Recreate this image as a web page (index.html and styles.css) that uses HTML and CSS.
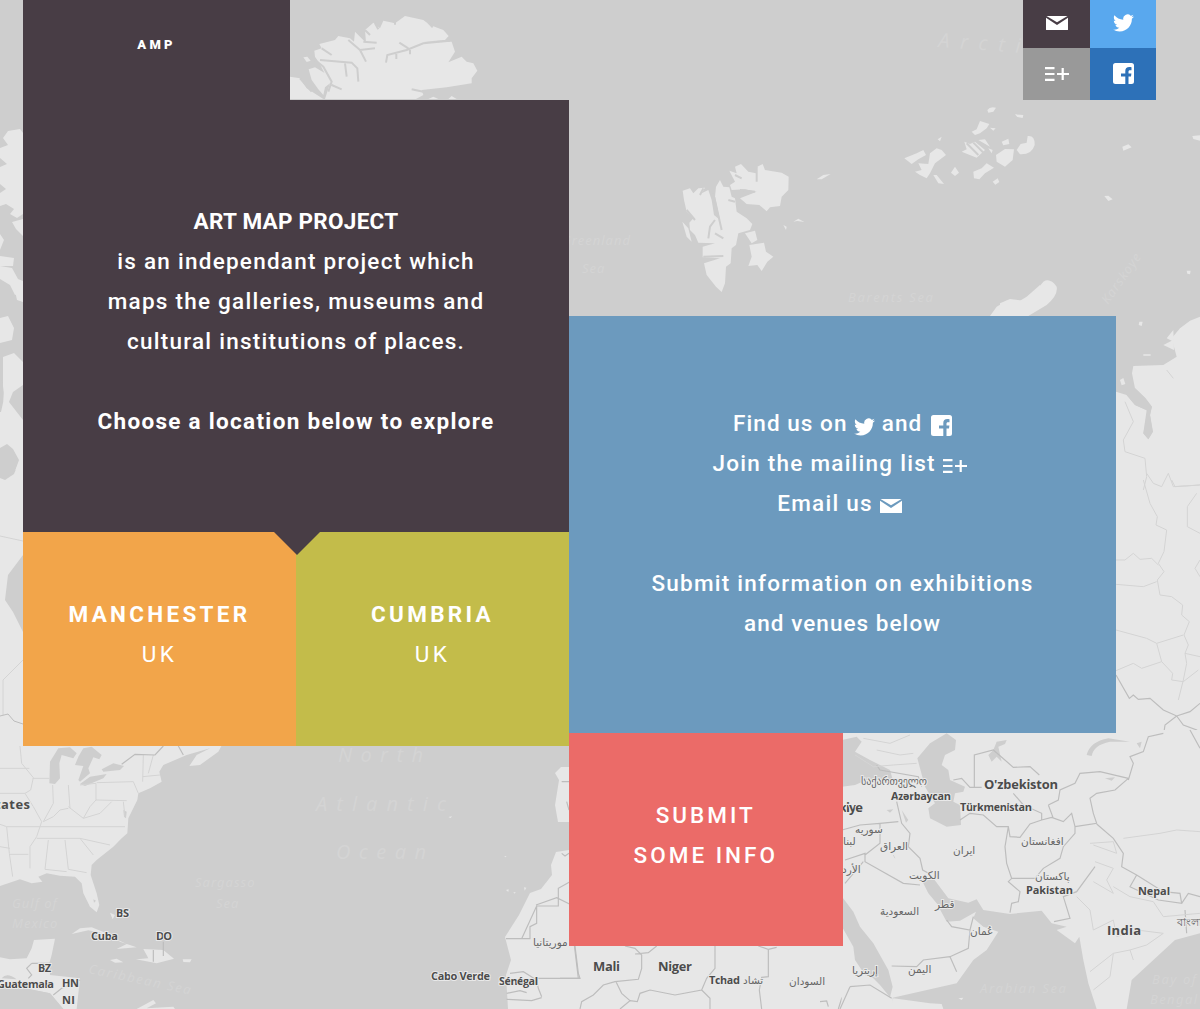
FILE: index.html
```html
<!DOCTYPE html>
<html lang="en">
<head>
  <meta charset="UTF-8">
  <meta name="viewport" content="width=device-width, initial-scale=1.0">
  <title>Art Map Project</title>
  <link rel="stylesheet" href="styles.css">
</head>
<body>

<!-- icon shapes used in the header and in the text -->
<svg class="defs" width="0" height="0">
  <symbol id="mail" viewBox="0 0 22 14"><path fill="currentColor" d="M.5 0h21L11 6.2zM0 1.800L11 8.900 22 1.800V13.500a.5.5 0 0 1-.5.5H.5a.5.5 0 0 1-.5-.5z"/></symbol>
  <symbol id="twitter" viewBox="0 2.200 24 19.600"><path fill="currentColor" d="M23.950 4.570a10 10 0 0 1-2.820.77 4.960 4.960 0 0 0 2.160-2.720 9.900 9.900 0 0 1-3.120 1.190 4.920 4.920 0 0 0-8.390 4.480C7.690 8.090 4.070 6.130 1.640 3.160a4.820 4.820 0 0 0-.67 2.480c0 1.710.87 3.210 2.190 4.100a4.900 4.900 0 0 1-2.230-.62v.06a4.920 4.920 0 0 0 3.950 4.830 5 5 0 0 1-2.210.08 4.940 4.940 0 0 0 4.600 3.420A9.870 9.870 0 0 1 0 19.540a14 14 0 0 0 7.550 2.210c9.050 0 14-7.500 14-13.980 0-.21 0-.42-.02-.63a9.940 9.940 0 0 0 2.460-2.550z"/></symbol>
  <symbol id="facebook" viewBox="0 0 21 21"><path fill="currentColor" d="M2.500 0h16A2.500 2.500 0 0 1 21 2.500v16a2.500 2.500 0 0 1-2.500 2.500H15.500v-7.500h2.500l.4-3H15.500V8.700c0-1 .4-1.500 1.500-1.500H18.500V4.300c-.5-.1-1.300-.2-2.200-.2-2.600 0-4 1.400-4 4v2.400H8v3h4.300V21H2.500A2.500 2.500 0 0 1 0 18.500v-16A2.500 2.500 0 0 1 2.500 0z"/></symbol>
  <symbol id="list" viewBox="0 0 24 14"><path fill="none" stroke="currentColor" stroke-width="2.200" d="M0 1.200h9.500M0 7h9.500M0 12.800h9.500M12 7h12M17.700 1v12"/></symbol>
</svg>

<svg class="map" viewBox="0 0 1200 1009" preserveAspectRatio="none">
  <!-- greenland -->
  <g transform="translate(280 0) scale(.33333)">
    <path class="land" d="M30 297V230L60 235 80 265 130 297zM70 172L82 170 92 182 80 186zM86 208L105 202 135 220 150 250 135 262 130 285 115 268 95 240zM103 152L125 145 118 132 165 120 175 108 210 115 222 125 225 95 258 128 255 90 280 68 300 85 310 62 345 70 375 48 430 60 450 75 490 90 506 108 495 120 430 125 515 125 525 155 505 187 545 170 560 185 580 190 592 212 575 235 575 250 500 262 425 270 430 285 408 297H135L150 250 118 190 105 170zM445 297L460 290 475 297zM505 297L515 288 530 297z"/>
    <path class="fjord" d="M120 180L215 188 232 205 235 245M195 190L200 230M205 120L240 150 285 145M240 150L258 185M250 125L290 128M318 188L322 165 380 150 430 130 510 122M358 128L385 145M390 150V163M349 162V177M105 180L130 200 155 245 145 275M155 255L185 268M255 90L270 105M285 70L295 88M345 60V74M445 68L458 82M125 145L155 165M395 268L430 275M60 235L95 275"/>
  </g>

  <!-- svalbard and franz josef land -->
  <g transform="translate(640 0) scale(.33333)">
    <path class="land" d="M128 572L150 565 160 580 175 565 195 563 185 580 205 570 215 600 222 645 240 660 225 590 228 560 240 540 250 560 268 562 275 590 285 595 290 635 320 655 337 672 330 690 295 700 288 735 275 745 272 790 258 800 255 850 245 876 228 860 200 825 192 790 240 775 188 772 188 740 225 730 175 728 165 705 150 690 148 668 160 655 140 635 132 600zM127 665L145 685 155 725 140 710zM268 512L290 520 285 500 303 492 325 515 348 520 352 500 368 492 375 510 425 518 446 530 445 570 425 590 420 618 390 622 380 634 358 615 320 612 300 595 350 575 315 568 275 570 270 555 285 545zM315 700L345 692 352 720 335 730 325 715zM328 735L372 728 378 755 400 770 382 785 365 813 352 795 325 798 335 770zM530 538L550 525 572 522 545 538zM460 665L475 656 493 666 472 663zM430 675L440 680 438 690z"/>
    <path class="land" d="M793 475L830 460 850 450 858 465 835 478 815 492zM870 460L890 445 905 450 918 465 885 490 870 520 860 535 840 525 825 515 845 510 835 490 865 492zM893 418L905 410 900 424zM880 525L890 525 912 552 895 550zM933 518L945 500 957 518 945 528zM965 455L980 448 973 425 990 432 1005 425 1035 450 1010 473zM995 395L1010 388 1020 363 1048 372 1040 385 1020 400 1005 405zM1042 330Q1050 318 1068 323L1060 335 1045 338zM1125 343L1150 345 1148 354 1132 351zM1085 425L1105 416 1108 432 1090 436zM1068 465L1095 447 1122 448 1118 480 1095 500 1070 485zM1130 450L1142 432 1160 428 1163 408Q1185 405 1184 435 1175 465 1140 463zM1000 515L1025 505 1040 490 1062 503 1035 520 1018 538 1002 535zM1058 545L1073 535 1078 546 1066 554zM1045 445L1058 450 1055 460zM1015 420L1050 440 1035 418zM1050 383L1067 385 1060 392zM968 485L988 518M1050 948L1070 920 1100 902 1130 908 1160 890 1200 855V925L1145 948z"/>
    <path class="fjord" d="M180 585L190 565M220 580L245 690M205 715L210 680 225 660M225 700L250 715M140 630L165 660M190 770L250 768M350 500V545M300 570L345 575M285 525L305 535M265 600L285 605M980 430L1015 465M1000 428L1032 460"/>
  </g>

  <!-- siberia -->
  <g transform="translate(1000 90) scale(.33333)">
    <path class="land" d="M0 640L30 627 70 632 105 605 130 575Q150 562 170 590 175 615 140 645L85 678H0zM367 170L385 163 395 172 370 182zM313 318L325 317 338 328 325 333zM577 138L600 136V152L580 147zM560 542L572 542 570 553 562 551zM418 695L428 695 425 708 416 705zM360 870L370 864 376 882 365 886zM430 793H452V797H430z"/>
    <path class="land" d="M600 680L570 692 540 715 515 745 530 800 490 825 400 828 396 850 405 895 435 925 455 950 450 975 458 1025 445 1048 430 1030 440 960 405 945 380 915 348 905V1200H600z"/>
    <path class="land" d="M520 720L500 745 515 752 490 765 522 780z"/>
    <path class="sea" d="M404 893L437 925 456 950 450 975 459 1025 445 1048 430 1030 443 962 405 945 380 915z"/>
    <path class="state" d="M375 935L400 995 370 1050 375 1085 435 1105 440 1160 430 1200M440 1150L460 1180 485 1190 505 1150 520 1190 600 1185M500 840L520 865"/>
  </g>
  <path class="land" d="M1116 490H1200V1009H1116z"/>
  <g transform="translate(1100 480) scale(.33333)">
    <path class="state" d="M130 0L150 70 172 110 168 135 200 150 192 215 175 250 192 275 172 300 180 345 215 350 248 375 245 405 268 425 252 465 265 495 255 520 260 550 250 600 235 660M48 240H75L100 220 120 238 155 235 175 255M48 313L130 320 170 305M48 450L140 475 170 490 250 465M170 490L185 545 218 580 215 600 250 605 295 570M48 572L100 550 125 565 185 545M255 520L300 530M290 40L262 80 262 140 300 160M300 240L285 265 300 290M215 0L225 20 300 15"/>
    <path class="border" d="M48 585L88 655 100 645 115 658 150 655 190 690 230 708 270 695 300 670M230 708L250 735 290 750 295 800M230 708L195 735 190 770 145 765 130 815 85 825"/>
  </g>

  <!-- canada, seen along the left edge -->
  <path class="land" d="M8 131L20 129 23 133V214L17 218 10 214 14 209 6 204 0 206V193L6 189 0 184V167L7 164 0 158V148L8 145 3 138zM12 222L23 219V236L16 229zM0 234L4 240 0 250zM0 256L14 258 13 266 0 266zM15 291L23 290V302L17 300zM0 266L12 268 18 279 23 281V290L15 295 10 285 0 279zM0 318L8 316 14 328 12 340 0 343zM3 357L14 353 23 362V385L13 392 9 402 23 420V470H0V410L3 400z"/>
  <path class="sea" d="M0 375Q7 392 1 412L0 412zM0 448L7 444 13 449 19 460 14 474 5 476 0 470z"/>
  <path class="land" d="M0 478L5 480 14 474 23 452V760H0z"/>
  <path class="sea" d="M23 555L8 575 5 600 13 612 23 632z"/>
  <path class="state" d="M0 536L23 541M3 680V715M3 680L23 660"/>
  <path class="border" d="M0 716L8 714 14 721 23 724"/>

  <!-- north america -->
  <g transform="translate(0 730) scale(.33333)">
    <path class="land" d="M0 0H690L655 65 600 105 568 108 590 75 630 55 560 75 490 105 478 125 485 155 450 175 415 190 412 210 385 265 382 310 365 325 340 350 290 390 275 405 272 435 290 490 298 525 290 547 270 530 250 490 245 460 225 440 180 437 140 430 115 440 127 455 95 460 60 448 0 468z"/>
    <path class="land" d="M215 612L240 595 275 592 320 610 360 635 410 652 350 657 380 642 310 610 265 601zM330 690L350 686 370 697 345 698zM408 688L445 685 430 657 490 660 522 686 470 700zM548 688L575 688 570 697 550 696zM0 682L30 688 80 685 95 655 102 630 165 626 155 675 148 700 150 735 240 745 230 837H190L150 790 0 760zM330 548L345 555 338 568zM410 837L460 810 468 820 440 835 520 830 525 837z"/>
    <path class="sea" d="M148 160L150 95 175 55 210 52 230 70 220 85 185 75 178 100 180 145 165 162zM235 80L250 55 275 50 305 75 298 88 280 82 265 115 270 130 240 155 235 150 250 108 225 105zM240 162L270 140 320 132 310 145 255 168zM305 118L340 100 372 108 360 120 310 125zM280 508L288 512 282 518zM370 240L380 245 378 265 372 260zM5 745Q20 725 50 748zM0 760L150 790 190 837H0z"/>
    <path class="state" d="M60 48L65 100 100 143 92 180 75 190M0 115H88M98 145H148M0 190H75L100 230 125 275 110 320 90 350V415M0 283L20 290H375M20 290L28 370 38 440M30 373H85M0 350L30 355M158 165L160 220 130 275M205 165L210 235M205 235L180 240 160 260 130 275M240 165L288 160V210L270 230 250 265 205 230M290 158L400 155 415 190M288 210L380 212M250 265L300 250 335 215M110 325L240 325 330 345M145 330L135 418 200 425M195 330L205 418 260 428M240 325L280 375M430 75L428 155M428 140L480 135M460 75L445 130M370 215L375 260"/>
    <path class="border" d="M490 48L465 75 405 73 365 103M535 48L550 75M95 700L150 700M95 700L80 715 95 735 85 745M240 750L185 775 160 795M460 660V695M490 635V678"/>
  </g>

  <!-- west africa and iberia -->
  <path class="land" d="M569 767L561 767 555 773 559 780 555 805 558 822H569zM569 850L556 852 551 865 552 875 541 889 530 893 519 915 505 937 511 960 506 975 508 1009H890V850z"/>
  <g transform="translate(290 730) scale(.33333)">
    <path class="land" d="M648 480L656 478 655 486zM670 487L677 486 674 491zM702 472L709 473 704 482zM475 261L486 259 482 264zM642 379L649 378 648 382z"/>
    <path class="border" d="M648 626H720V590L740 580V528H805V475L840 455M738 525L800 503 840 523M740 528L695 626M850 620L865 745H740M660 730L700 725 740 750 745 775 755 800M650 790L690 782 710 788M650 808L725 812 755 803M815 155H837M830 215L837 240M815 370L825 378 837 370"/>
  </g>
  <g transform="translate(560 930) scale(.33333)">
    <path class="border" d="M45 48L55 130 60 145H0M195 48L225 55 245 75V115L235 148 165 155 130 165 100 195 65 215 60 237M225 72L265 68 290 48M168 155L185 190 210 212 180 237M210 212L232 215 240 190 270 180 345 195 425 180 440 145 465 115V48M425 180L450 205V237M595 48L625 58V140L605 142 598 180 605 237M625 58L650 52M780 215L800 213 805 230M900 165L870 172 845 205 835 237"/>
  </g>

  <!-- middle east and india -->
  <g transform="translate(830 730) scale(.33333)">
    <path class="land" d="M35 0H1110V837H35z"/>
    <path class="sea" d="M36 30L80 20 95 35 75 65 120 90 180 120 190 155 110 150 75 165 36 170zM300 40L350 10 378 30 375 60 345 75 335 105 355 120 360 150 405 170 400 185 375 190 370 215 390 225 393 285 350 290 300 265 295 235 315 220 285 170 262 85zM275 450L310 445 355 505 415 518 440 508 460 540 540 552 635 542 665 580 710 590 680 600 735 640 748 620 760 690 775 760 800 837H330L190 837 188 803 380 760 430 690 470 660 505 605 460 590 430 565 438 545 390 572 350 575 320 520 295 490zM36 500L70 545 90 590 130 640 175 720 188 770 180 802 150 765 130 745 105 735 75 690 70 650 36 590zM890 837L905 750 1035 630 1110 610V837z"/>
    <path class="land" d="M190 805L300 820 335 822 340 837H180zM385 805L400 803 395 810z"/>
    <path class="sea" d="M770 75Q780 35 835 25L900 35 840 35Q790 45 785 78zM500 35L530 30 525 42 505 50 515 95 500 80 485 95 475 75 490 60zM920 40L935 35 930 55zM825 145L855 142 845 152zM215 240L235 270 228 278zM170 240L190 238 180 248z"/>
    <path class="border" d="M433 172V75L490 60 550 112 600 110 628 135M370 150L395 145 420 172 455 172M390 270L420 250 460 255 500 290 535 290 540 320 570 322 600 282 635 270 665 262 700 275 725 250 735 290M635 270V250L580 225 550 190M655 225L685 210 690 180 735 160 750 130 810 125 895 145 855 180 800 190 780 205 790 250 800 280 735 290M655 225L670 265M895 150L910 100 900 80 940 65 955 20 1000 10M1080 0L1110 55M535 290L525 350 530 400 545 445H615M545 445L535 455 570 485 565 515 545 520 540 548M615 445L640 415 690 385 700 350 735 310 735 290M800 282L850 325 880 370 875 410 920 435 1000 485 1050 490 1055 520 985 510 900 470 920 435M795 410L740 485 700 500 720 565 672 575M200 215L215 280 240 310 235 350 270 385 278 420 300 432M36 300L90 285 150 280 205 275M105 375L150 340 150 280M45 390L105 370V395L220 460 270 465M45 460L100 395M350 570L365 590 420 600 430 560M420 600L415 655 360 680 280 690 260 710 185 708M360 680L380 725M60 770L120 765 185 805M60 770L30 837M140 105L150 120 265 140 275 170M1055 520L1075 490 1110 500M1065 540L1070 610"/>
    <path class="state" d="M75 75L130 110 190 105 260 100M100 25L180 40 240 15M140 60L210 75 250 70M780 340L850 335 860 370 790 345M795 395L850 415 830 450 850 490 790 455M850 470L900 500 970 515 1000 560 1110 550M740 500L780 540 790 600 850 570 860 620 920 600 1000 610M780 725L850 670 900 660 950 645 1000 610M850 670L840 740 790 780M900 660L910 690M880 325L990 310 1040 300 1110 305M190 375L195 385"/>
  </g>

  <!-- sea names -->
  <g class="sea-name">
    <text x="338" y="762" textLength="93">North</text>
    <text x="316" y="811" textLength="138">Atlantic</text>
    <text x="336" y="859" textLength="98">Ocean</text>
    <text x="938" y="47" textLength="110" transform="rotate(4 938 47)">Arctic</text>
    <text class="small" x="195" y="887">Sargasso</text>
    <text class="small" x="216" y="908">Sea</text>
    <text class="small" x="12" y="908">Gulf of</text>
    <text class="small" x="12" y="928">Mexico</text>
    <text class="small" x="88" y="973" transform="rotate(12 88 973)" textLength="105">Caribbean Sea</text>
    <text class="small" x="562" y="245">Greenland</text>
    <text class="small" x="582" y="273">Sea</text>
    <text class="small" x="848" y="302" textLength="86">Barents Sea</text>
    <text class="small" x="980" y="993" textLength="87">Arabian Sea</text>
    <text class="small" x="1152" y="984" textLength="45">Bay of</text>
    <text class="small" x="1150" y="1004" textLength="48">Bengal</text>
    <text class="small" x="1108" y="305" transform="rotate(-55 1108 305)">Karskoye</text>
  </g>

  <!-- country names -->
  <g class="country">
    <text class="big" x="-5" y="809" textLength="35">tates</text>
    <text x="116" y="917" textLength="13">BS</text>
    <text x="91" y="940" textLength="27">Cuba</text>
    <text x="156" y="940" textLength="16">DO</text>
    <text x="38" y="972" textLength="13">BZ</text>
    <text x="-3" y="988" textLength="57">Guatemala</text>
    <text x="62" y="987" textLength="17">HN</text>
    <text x="62" y="1004" textLength="13">NI</text>
    <text x="431" y="980" textLength="59">Cabo Verde</text>
    <text x="499" y="985" textLength="39">Sénégal</text>
    <text class="big" x="593" y="971" textLength="27">Mali</text>
    <text class="big" x="658" y="971" textLength="34">Niger</text>
    <text x="709" y="984" textLength="31">Tchad</text>
    <text class="big" x="834" y="812" textLength="29">rkiye</text>
    <text x="891" y="800" textLength="60">Azərbaycan</text>
    <text class="big" x="984" y="789" textLength="74">O'zbekiston</text>
    <text x="960" y="811" textLength="72">Türkmenistan</text>
    <text x="1026" y="894" textLength="47">Pakistan</text>
    <text x="1138" y="895" textLength="32">Nepal</text>
    <text class="big" x="1107" y="935" textLength="34">India</text>
  </g>
  <g class="country local">
    <text x="533" y="946">موريتانيا</text>
    <text x="743" y="984">تشاد</text>
    <text x="789" y="985">السودان</text>
    <text x="852" y="974">إريتريا</text>
    <text x="861" y="785" textLength="66">საქართველო</text>
    <text x="855" y="833">سوريه</text>
    <text x="843" y="845">لبنا</text>
    <text x="880" y="850">العراق</text>
    <text x="953" y="854">ایران</text>
    <text x="1021" y="845">افغانستان</text>
    <text x="909" y="879">الكويت</text>
    <text x="842" y="873">الأرد</text>
    <text x="1035" y="880">پاکستان</text>
    <text x="935" y="908">قطر</text>
    <text x="880" y="915">السعودية</text>
    <text x="970" y="935">عُمان</text>
    <text x="908" y="973">اليمن</text>
    <text x="1177" y="926">বাংলাদেশ</text>
  </g>
</svg>

<header class="top">
  <a class="logo" href="#">AMP</a>
  <nav class="social">
    <a class="dark" href="#"><svg class="icon mail"><use href="#mail"/></svg></a>
    <a class="sky" href="#"><svg class="icon twitter"><use href="#twitter"/></svg></a>
    <a class="grey" href="#"><svg class="icon list"><use href="#list"/></svg></a>
    <a class="navy" href="#"><svg class="icon facebook"><use href="#facebook"/></svg></a>
  </nav>
</header>

<main class="blocks">
  <div class="column">
    <section class="intro">
      <p><strong class="title">ART MAP PROJECT</strong></p>
      <p>is an independant project which</p>
      <p>maps the galleries, museums and</p>
      <p>cultural institutions of places.</p>
      <p>&nbsp;</p>
      <p><strong class="choose">Choose a location below to explore</strong></p>
    </section>
    <div class="places">
      <a class="place orange" href="#"><strong>MANCHESTER</strong><span>UK</span></a>
      <a class="place green" href="#"><strong>CUMBRIA</strong><span>UK</span></a>
    </div>
  </div>
  <div class="column second">
    <section class="contact">
      <p class="find">Find us on <svg class="icon twitter"><use href="#twitter"/></svg> and <svg class="icon facebook"><use href="#facebook"/></svg></p>
      <p class="join">Join the mailing list <svg class="icon list"><use href="#list"/></svg></p>
      <p class="email">Email us <svg class="icon mail"><use href="#mail"/></svg></p>
      <p>&nbsp;</p>
      <p>Submit information on exhibitions</p>
      <p class="venues">and venues below</p>
    </section>
    <a class="submit" href="#"><span>SUBMIT</span><span>SOME INFO</span></a>
  </div>
</main>

</body>
</html>
```
FILE: styles.css
```css
* {
  box-sizing: border-box;
}

body {
  margin: 0;
  height: 1009px;
  overflow: hidden;
  position: relative;
  background: #cecece;
  color: #fff;
  font-family: Roboto, "Liberation Sans", sans-serif;
  font-size: 22.5px;
  font-weight: 500;
  line-height: 40px;
}

a {
  color: #fff;
  text-decoration: none;
}

p {
  margin: 0;
  white-space: nowrap;
  letter-spacing: 1.250px;
}

strong {
  font-weight: 700;
}

.defs {
  position: absolute;
}

/* map behind the page */
.map {
  position: absolute;
  left: 0;
  top: 0;
  width: 1200px;
  height: 1009px;
  z-index: -1;
}

.land {
  fill: #e7e7e7;
}

.sea {
  fill: #cecece;
}

.fjord {
  fill: none;
  stroke: #cecece;
  stroke-width: 6;
}

.state {
  fill: none;
  stroke: #d4d4d4;
  stroke-width: 3;
}

.border {
  fill: none;
  stroke: #bdbdbd;
  stroke-width: 3.5;
}

svg > .state,
svg > .border {
  stroke-width: 1;
}

.sea-name {
  fill: #d4d4d4;
  font: italic 20px "Noto Sans", sans-serif;
  letter-spacing: 8px;
}

.sea-name .small {
  font-size: 13px;
  letter-spacing: 1px;
}

.country {
  fill: #4c4c4c;
  stroke: #e9e9e9;
  stroke-width: 2px;
  paint-order: stroke;
  font: 700 11px "Open Sans", "Noto Sans", sans-serif;
}

.country .big {
  font-size: 13px;
}

.local {
  fill: #666;
  font: 10.5px "DejaVu Sans", "Noto Sans", sans-serif;
}

/* top row */
.top {
  display: flex;
  justify-content: space-between;
  height: 99.500px;
  padding: 0 44px 0 23px;
}

.logo {
  width: 267px;
  padding-top: 25px;
  background: #483d45;
  text-align: center;
  font-size: 13px;
  font-weight: 900;
  letter-spacing: 3.200px;
}

.social {
  display: grid;
  grid-template-columns: 67px 66px;
  grid-template-rows: 48px 51.500px;
}

.social a {
  display: flex;
  align-items: center;
  justify-content: center;
}

.social .dark,
.social .sky {
  padding-bottom: 2px;
}

.dark { background: #483d45; }
.sky { background: #59a8ee; }
.grey { background: #999; }
.navy { background: #2d71b8; }

.icon {
  display: inline-block;
}

.mail { width: 22px; height: 14px; }
.twitter { width: 21px; height: 18px; }
.facebook { width: 21px; height: 21px; }
.list { width: 24px; height: 14px; }

.contact .twitter,
.contact .facebook {
  vertical-align: -5px;
}

.contact .mail,
.contact .list {
  vertical-align: -2px;
}

/* coloured blocks */
.blocks {
  display: flex;
  padding-left: 23px;
}

.column {
  width: 546px;
}

.second {
  width: 547px;
  padding-top: 216.500px;
}

.intro {
  height: 432.500px;
  padding-top: 101px;
  background: #483d45;
  text-align: center;
}

.title {
  letter-spacing: .270px;
}

.choose {
  letter-spacing: 1.300px;
}

.places {
  display: flex;
  position: relative;
}

/* arrow pointing at the locations */
.places::before {
  content: "";
  position: absolute;
  left: 251px;
  top: 0;
  border: 23px solid transparent;
  border-top-color: #483d45;
  border-bottom: 0;
}

.place {
  display: flex;
  flex-direction: column;
  flex: 1;
  height: 213.500px;
  padding-top: 62px;
  text-align: center;
  letter-spacing: 3.300px;
}

.place span {
  font-weight: 400;
}

.orange { background: #f2a54a; }
.green { background: #c3bc4a; }

.contact {
  height: 417px;
  padding-top: 87px;
  background: #6c9abe;
  text-align: center;
}

.join,
.email {
  padding-right: 6px;
}

.find,
.venues {
  letter-spacing: 1.050px;
}

.find .facebook {
  margin-left: 2px;
}

.submit {
  display: flex;
  flex-direction: column;
  width: 273.500px;
  height: 213px;
  padding-top: 62px;
  background: #eb6b68;
  text-align: center;
  letter-spacing: 3px;
}
```
